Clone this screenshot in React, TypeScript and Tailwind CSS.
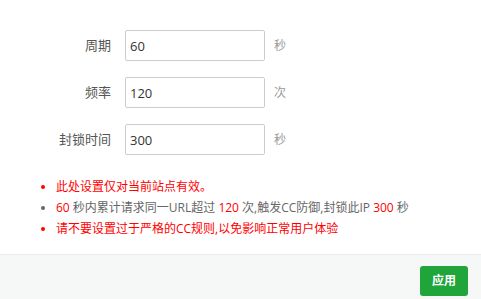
import React from "react";

const rows = [
  { label: "周期", value: "60", unit: "秒" },
  { label: "频率", value: "120", unit: "次" },
  { label: "封锁时间", value: "300", unit: "秒" },
];

const font = { fontFamily: '"Open Sans", "Noto Sans CJK SC", sans-serif' };

const App = () => {
  return (
    <div className="w-[481px] h-[299px] bg-white flex flex-col overflow-hidden" style={font}>
      <div className="flex flex-col gap-4 pt-[30px]">
        {rows.map((row) => (
          <div key={row.label} className="flex items-center h-[31px]">
            <label className="w-[111px] text-right text-[13px] text-[#555]">{row.label}</label>
            <input
              className="ml-[14px] w-[140px] h-[31px] border border-[#ccc] rounded-[2px] pl-[4px] text-[13px] text-[#333] outline-none"
              defaultValue={row.value}
            />
            <span className="ml-[9px] text-[12px] text-[#999]">{row.unit}</span>
          </div>
        ))}
      </div>
      <ul className="mt-[21px] pl-[41px] text-[12px] leading-[21px]">
        <li className="flex items-center text-[#ff0000]">
          <span className="w-[4px] h-[4px] rounded-full bg-[#ff0000] mr-[11px]" />
          此处设置仅对当前站点有效。
        </li>
        <li className="flex items-center text-[#666]">
          <span className="w-[4px] h-[4px] rounded-full bg-[#666] mr-[11px]" />
          <span className="text-[#ff0000]">60</span>&nbsp;秒内累计请求同一URL超过&nbsp;
          <span className="text-[#ff0000]">120</span>&nbsp;次,触发CC防御,封锁此IP&nbsp;
          <span className="text-[#ff0000]">300</span>&nbsp;秒
        </li>
        <li className="flex items-center text-[#ff0000]">
          <span className="w-[4px] h-[4px] rounded-full bg-[#ff0000] mr-[11px]" />
          请不要设置过于严格的CC规则,以免影响正常用户体验
        </li>
      </ul>
      <div className="mt-auto h-[45px] border-t border-[#e8ecec] bg-[#f6f8f8] flex justify-end items-start pt-[11px] pr-[13px]">
        <button className="w-[48px] h-[30px] rounded-[3px] bg-[#20a53a] text-white text-[12px] font-bold">
          应用
        </button>
      </div>
    </div>
  );
};

export default App;
